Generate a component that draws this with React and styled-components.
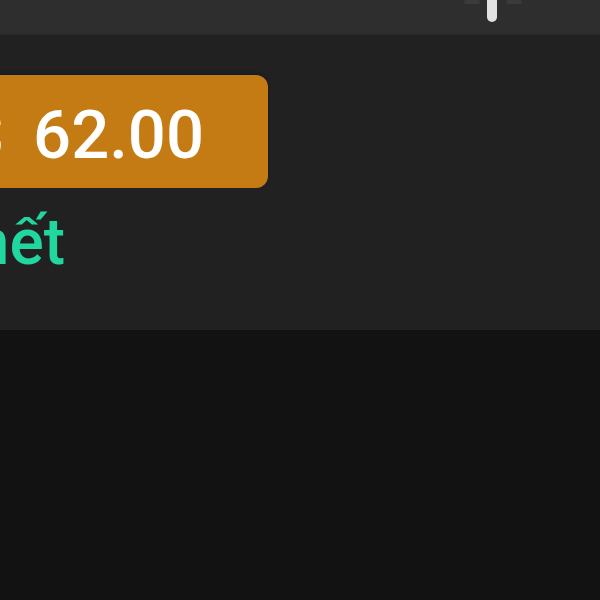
import React from "react";
import styled, { createGlobalStyle } from "styled-components";

const Global = createGlobalStyle`
  html, body { margin: 0; padding: 0; background: #121212; }
  body { font-family: Roboto, "Noto Sans", sans-serif; }
`;

const Page = styled.div`
  width: 600px;
  height: 600px;
  background: #121212;
  display: flex;
  flex-direction: column;
  overflow: hidden;
`;

const TopBar = styled.div`
  height: 35px;
  flex: none;
  background: #2e2e2e;
  display: flex;
  justify-content: flex-end;
  align-items: flex-start;
  padding-right: 78px;
`;

const Panel = styled.div`
  height: 295px;
  flex: none;
  background: #212121;
  box-shadow: 0 2px 6px rgba(0, 0, 0, 0.35);
  padding-top: 40px;
  box-sizing: border-box;
  display: flex;
  flex-direction: column;
  align-items: flex-start;
`;

const PriceButton = styled.button`
  margin-left: -60px;
  width: 328px;
  height: 113px;
  border: none;
  border-radius: 12px;
  background: #c47b13;
  color: #ffffff;
  font-family: Roboto, sans-serif;
  font-weight: 500;
  font-size: 67px;
  line-height: 1;
  display: flex;
  align-items: center;
  justify-content: flex-end;
  gap: 29px;
  padding: 8px 64px 0 0;
  box-sizing: border-box;
  white-space: nowrap;
  box-shadow: 0 -2px 3px rgba(10, 20, 40, 0.5);
`;

const LinkRow = styled.div`
  width: 65px;
  margin-top: 23px;
  display: flex;
  justify-content: flex-end;
`;

const DetailLink = styled.a`
  flex: none;
  font-family: Roboto, sans-serif;
  font-weight: 500;
  font-size: 64px;
  line-height: 1;
  color: #22d6a0;
  text-decoration: none;
  white-space: nowrap;
`;

const Rest = styled.div`
  flex: 1;
  background: #121212;
`;

function BarIcon() {
  return (
    <svg width="60" height="26" viewBox="0 0 60 26">
      <path d="M4 2 L16 2" stroke="#3a3a3a" strokeWidth="4" strokeLinecap="round" />
      <path d="M46 2 L58 2" stroke="#3a3a3a" strokeWidth="4" strokeLinecap="round" />
      <rect x="25" y="-8" width="10" height="30" rx="5" fill="#e2e2e2" />
    </svg>
  );
}

export default function App() {
  return (
    <>
      <Global />
      <Page>
        <TopBar>
          <BarIcon />
        </TopBar>
        <Panel>
          <PriceButton>
            <span>$</span>
            <span>62.00</span>
          </PriceButton>
          <LinkRow>
            <DetailLink href="#">Tính nết</DetailLink>
          </LinkRow>
        </Panel>
        <Rest />
      </Page>
    </>
  );
}
